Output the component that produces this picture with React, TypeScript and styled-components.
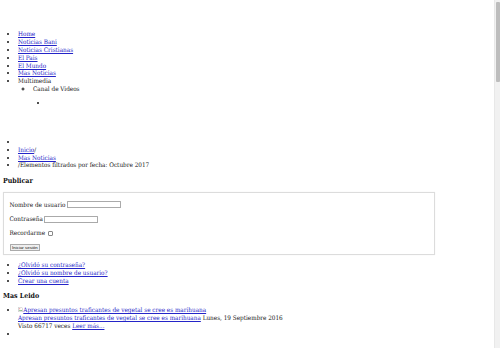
import styled, { createGlobalStyle } from 'styled-components';

const NAV_ITEMS = ['Home', 'Noticias Bani', 'Noticias Cristianas', 'El Pais', 'El Mundo', 'Mas Noticias'];

const ACCOUNT_LINKS = ['¿Olvidó su contraseña?', '¿Olvidó su nombre de usuario?', 'Crear una cuenta'];

const ARTICLE_TITLE = 'Apresan presuntos traficantes de vegetal se cree es marihuana';

const GlobalStyle = createGlobalStyle`
    html, body {
        margin: 0;
        background: #fff;
    }
    body {
        padding: 0 3px;
        font-family: 'DejaVu Serif', 'Liberation Serif', serif;
        font-stretch: condensed;
        font-size: 6.35px;
        line-height: 7.8px;
        color: #151515;
    }
`;

const Page = styled.div`
    min-height: 1510px;
`;

const Header = styled.div`
    height: 30.4px;
`;

// drawn scrollbar, the screenshot shows one on the right edge
const ScrollTrack = styled.div`
    position: fixed;
    top: 0;
    right: 0;
    width: 5px;
    height: 100vh;
    background: #f1f1f1;
    border-left: 0.5px solid #e8e8e8;
`;

const ScrollThumb = styled.div`
    margin: 2px 0.5px 0;
    height: 80px;
    border-radius: 1px;
    background: #bdbdbd;
`;

const List = styled.ul<{ kind?: string; top?: number }>`
    margin: ${({ top }) => top ?? 0}px 0 0;
    padding-left: 15px;
    list-style: ${({ kind }) => kind ?? 'disc'};
`;

const Item = styled.li`
    line-height: 7.8px;
`;

const Link = styled.a`
    color: #2424c8;
    text-decoration: underline;
`;

const Heading = styled.h3<{ top: number }>`
    margin: ${({ top }) => top}px 0 0;
    font-size: 7px;
    line-height: 7.8px;
    font-weight: bold;
    color: #111;
`;

const LoginBox = styled.form`
    margin-top: 7.2px;
    width: 419px;
    padding: 8.3px 5.5px 3px;
    border: 1px solid #dcdcdc;
    box-shadow: 0 0 1px rgba(0, 0, 0, 0.08);
`;

const Field = styled.div`
    display: flex;
    align-items: center;
    gap: 1.4px;
    height: 7.8px;
    margin-bottom: 6.4px;
`;

const TextInput = styled.input`
    box-sizing: border-box;
    width: 54px;
    height: 7px;
    margin: 0;
    padding: 0;
    border: 1px solid #aaa;
    border-radius: 0.5px;
    background: #fff;
`;

const Check = styled.span`
    display: inline-block;
    box-sizing: border-box;
    width: 5px;
    height: 5px;
    margin-left: 1px;
    border: 0.8px solid #888;
    border-radius: 1px;
`;

const SubmitButton = styled.button`
    display: block;
    box-sizing: border-box;
    height: 7px;
    margin: 1px 0 0;
    padding: 0 1.6px;
    border: 1px solid #aaa;
    border-radius: 0.5px;
    background: #efefef;
    font-family: 'Liberation Sans', Arial, sans-serif;
    font-size: 4.4px;
    line-height: 5px;
    color: #111;
`;

const BrokenImage = styled.svg`
    display: inline-block;
    width: 5px;
    height: 5px;
    vertical-align: 0;
    margin-right: 0.3px;
`;

const Placeholder = styled.div`
    height: 6.2px;
`;

export default function App() {
    return (
        <Page>
            <GlobalStyle />
            <ScrollTrack>
                <ScrollThumb />
            </ScrollTrack>
            <Header />

            <List>
                {NAV_ITEMS.map((item) => (
                    <Item key={item}>
                        <Link href="#">{item}</Link>
                    </Item>
                ))}
                <Item>
                    Multimedia
                    <List kind="circle">
                        <Item>
                            Canal de Videos
                            <Placeholder />
                            <List kind="disc">
                                <Item>&nbsp;</Item>
                            </List>
                        </Item>
                    </List>
                </Item>
            </List>

            <List top={31.2}>
                <Item>&nbsp;</Item>
                <Item>
                    <Link href="#">Inicio</Link>/
                </Item>
                <Item>
                    <Link href="#">Mas Noticias</Link>
                </Item>
                <Item>/Elementos filtrados por fecha: Octubre 2017</Item>
            </List>

            <Heading top={7.6}>Publicar</Heading>

            <LoginBox onSubmit={(e) => e.preventDefault()}>
                <Field>
                    <span>Nombre de usuario</span>
                    <TextInput type="text" />
                </Field>
                <Field>
                    <span>Contraseña</span>
                    <TextInput type="password" />
                </Field>
                <Field>
                    <span>Recordarme</span>
                    <Check />
                </Field>
                <SubmitButton type="submit">Iniciar sesión</SubmitButton>
            </LoginBox>

            <List top={6.4}>
                {ACCOUNT_LINKS.map((item) => (
                    <Item key={item}>
                        <Link href="#">{item}</Link>
                    </Item>
                ))}
            </List>

            <Heading top={7.6}>Mas Leido</Heading>

            <List top={6.6}>
                <Item>
                    <Link href="#">
                        <BrokenImage viewBox="0 0 10 10">
                            <path d="M1 0.5h6l2 2v7H1z" fill="#fff" stroke="#999" strokeWidth="0.8" />
                            <path d="M2 8l2-2 1.5 1.5L7 6l1 2z" fill="#4a9d4a" />
                            <circle cx="3.5" cy="3.5" r="1" fill="#d9534f" />
                        </BrokenImage>
                        {ARTICLE_TITLE}
                    </Link>
                    <br />
                    <Link href="#">{ARTICLE_TITLE}</Link> Lunes, 19 Septiembre 2016
                    <br />
                    Visto 66717 veces <Link href="#">Leer más...</Link>
                </Item>
                <Item>&nbsp;</Item>
            </List>
        </Page>
    );
}
